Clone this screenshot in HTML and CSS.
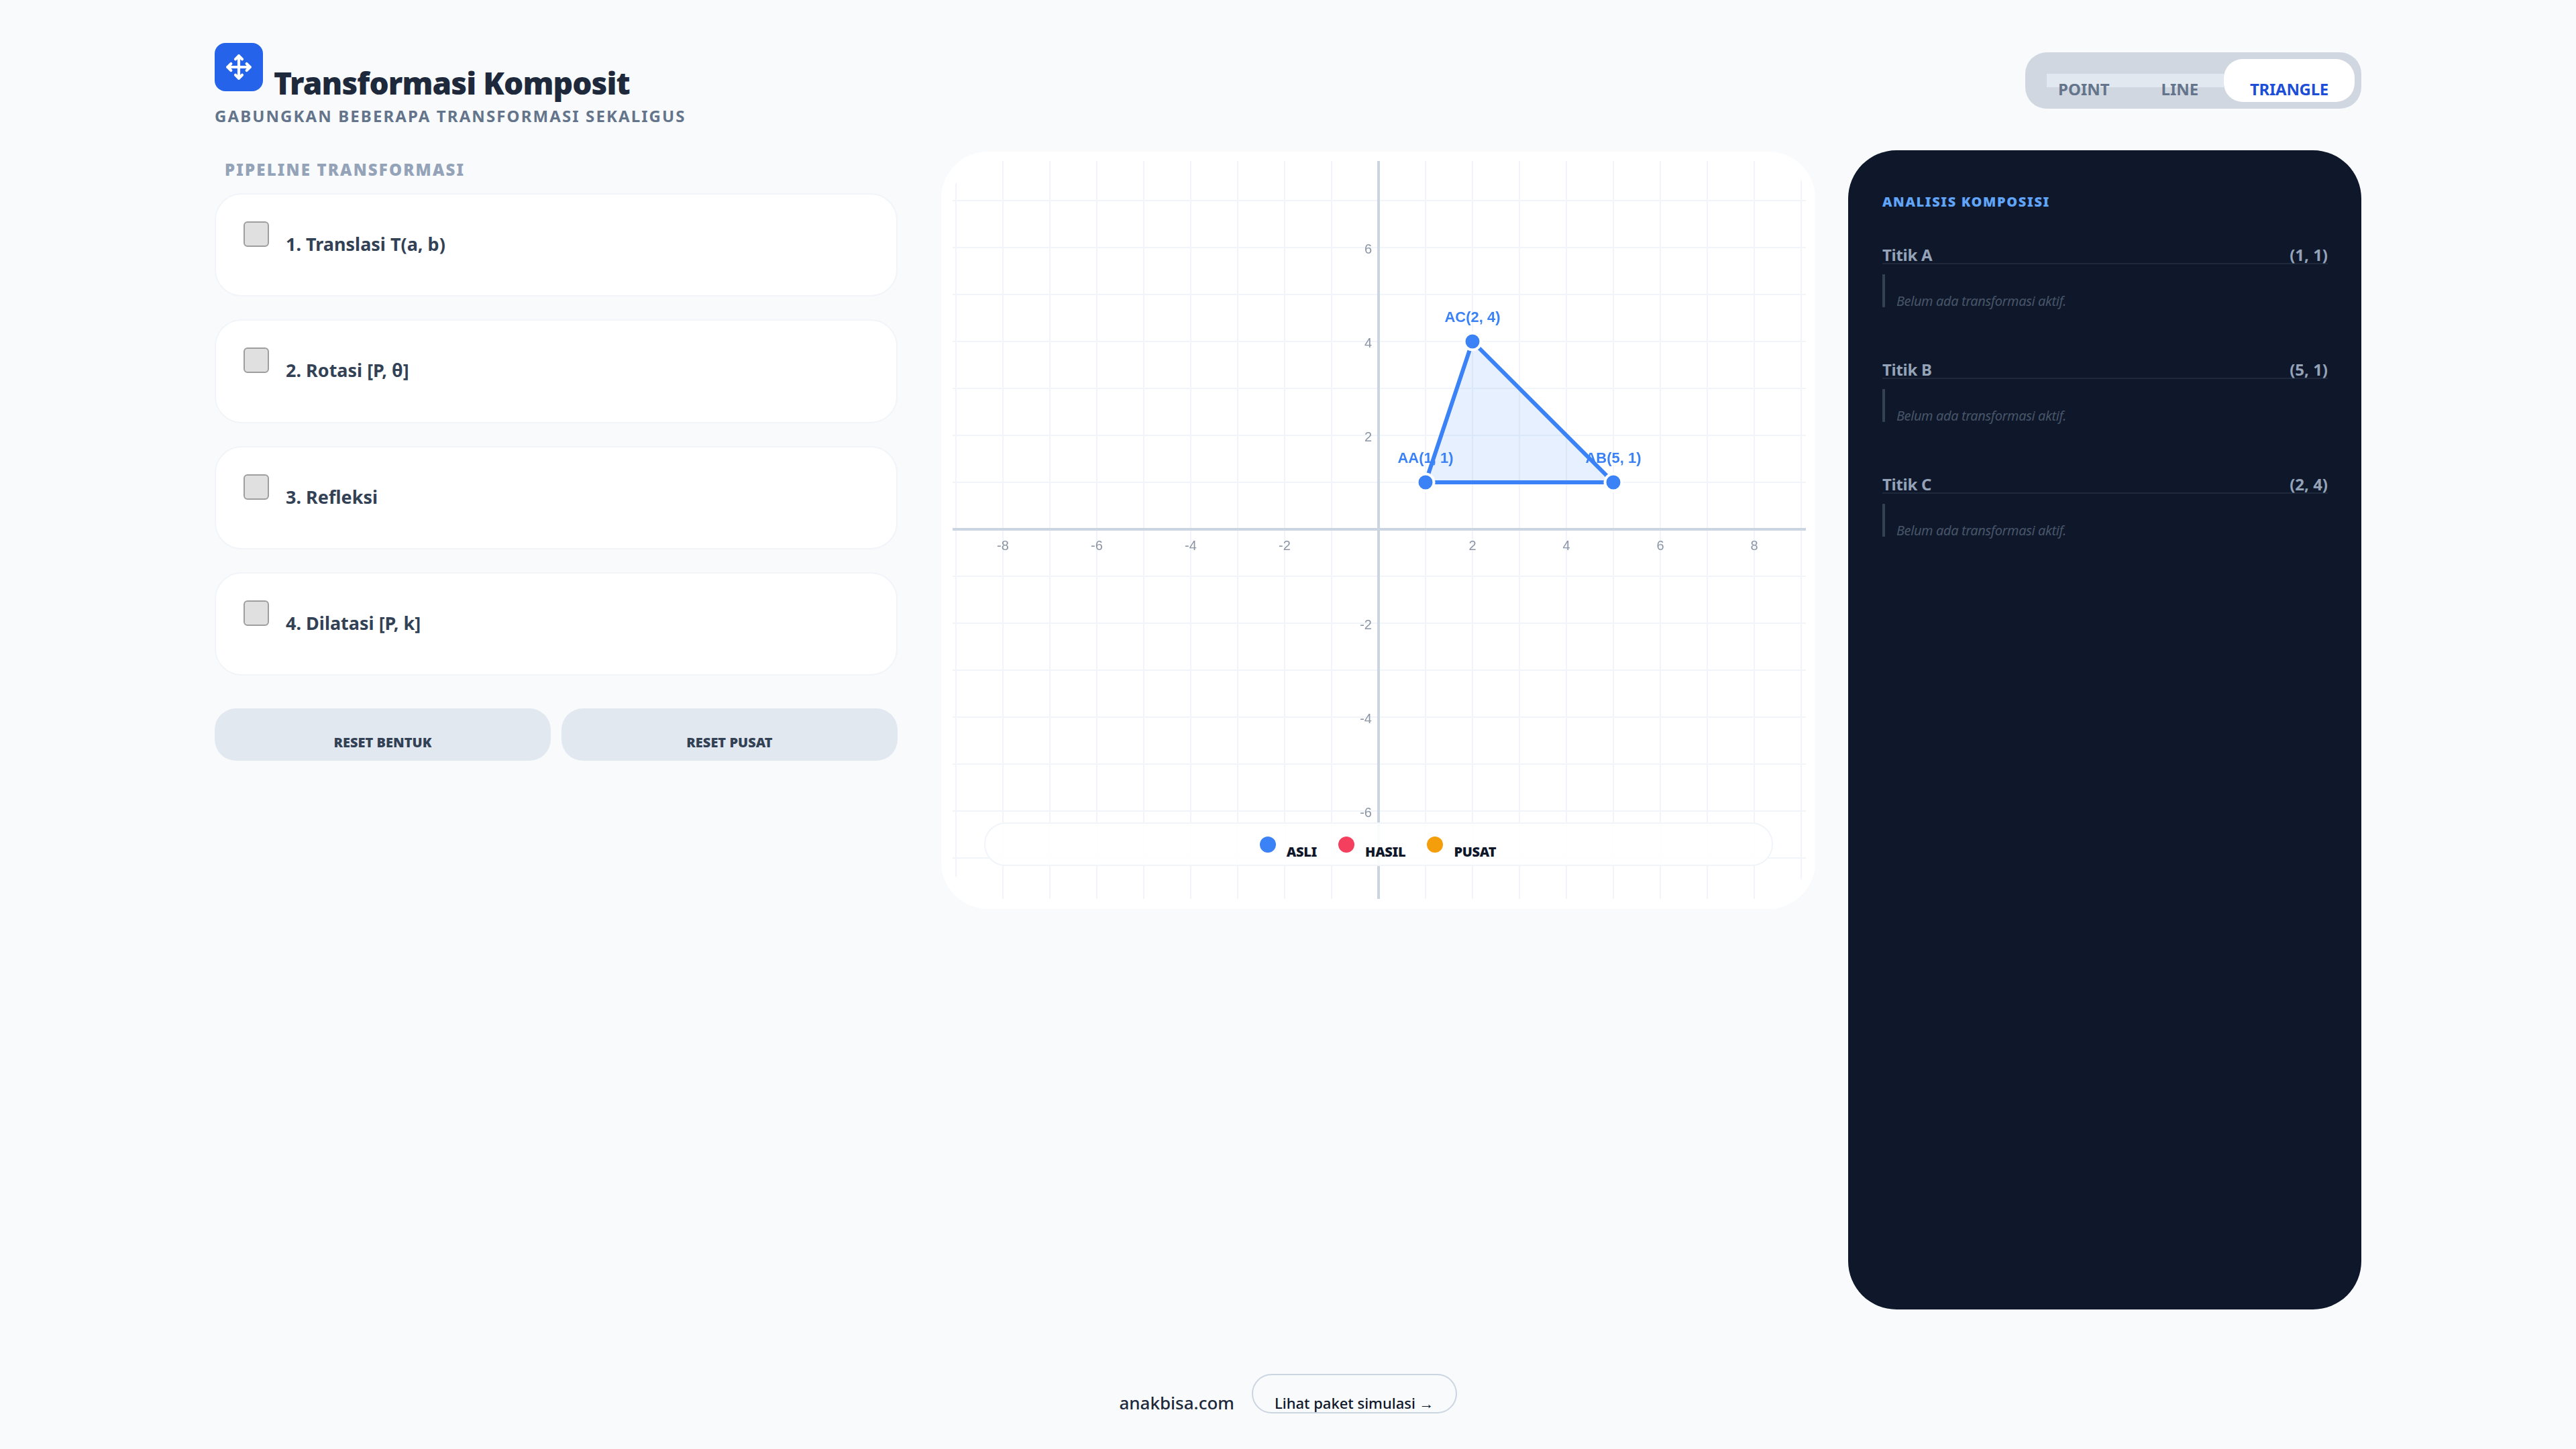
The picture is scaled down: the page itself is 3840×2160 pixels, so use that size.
FILE: index.html
```html
<!DOCTYPE html>
<html lang="en">

<head>
    <meta charset="UTF-8">
    <title>Transformasi Komposit</title>
    <link rel="stylesheet" href="styles.css">
</head>

<body>
    <header class="top">
        <div>
            <div class="brand">
                <span class="brand-icon">
                    <svg width="40" height="40" viewBox="0 0 24 24" fill="none" stroke="white" stroke-width="2.5" stroke-linecap="round" stroke-linejoin="round">
                        <polyline points="5 9 2 12 5 15"></polyline>
                        <polyline points="9 5 12 2 15 5"></polyline>
                        <polyline points="15 19 12 22 9 19"></polyline>
                        <polyline points="19 9 22 12 19 15"></polyline>
                        <line x1="2" y1="12" x2="22" y2="12"></line>
                        <line x1="12" y1="2" x2="12" y2="22"></line>
                    </svg>
                </span>
                <h1>Transformasi Komposit</h1>
            </div>
            <p class="subtitle">GABUNGKAN BEBERAPA TRANSFORMASI SEKALIGUS</p>
        </div>

        <div class="shape-toggle">
            <div class="shape-rest">
                <button class="shape-btn point">POINT</button>
                <button class="shape-btn line">LINE</button>
            </div>
            <button class="shape-active">TRIANGLE</button>
        </div>
    </header>

    <main class="layout">
        <section class="pipeline">
            <h2 class="section-label">PIPELINE TRANSFORMASI</h2>

            <div class="step-list">
                <label class="step-card"><input type="checkbox"><span>1. Translasi T(a, b)</span></label>
                <label class="step-card"><input type="checkbox"><span>2. Rotasi [P, θ]</span></label>
                <label class="step-card"><input type="checkbox"><span>3. Refleksi</span></label>
                <label class="step-card"><input type="checkbox"><span>4. Dilatasi [P, k]</span></label>
            </div>

            <div class="reset-row">
                <button class="reset-btn">RESET BENTUK</button>
                <button class="reset-btn">RESET PUSAT</button>
            </div>
        </section>

        <section class="graph-card">
            <svg class="graph" width="1272" height="1100" viewBox="0 0 1272 1100">
                <path class="grid" d="M5 0V1100M75 0V1100M145 0V1100M215 0V1100M285 0V1100M355 0V1100M425 0V1100M495 0V1100M565 0V1100M705 0V1100M775 0V1100M845 0V1100M915 0V1100M985 0V1100M1055 0V1100M1125 0V1100M1195 0V1100M1265 0V1100M0 59H1272M0 129H1272M0 199H1272M0 269H1272M0 339H1272M0 409H1272M0 479H1272M0 619H1272M0 689H1272M0 759H1272M0 829H1272M0 899H1272M0 969H1272M0 1039H1272"></path>
                <path class="axis" d="M635 0V1100M0 549H1272"></path>

                <g class="tick-x">
                    <text x="75" y="580">-8</text>
                    <text x="215" y="580">-6</text>
                    <text x="355" y="580">-4</text>
                    <text x="495" y="580">-2</text>
                    <text x="775" y="580">2</text>
                    <text x="915" y="580">4</text>
                    <text x="1055" y="580">6</text>
                    <text x="1195" y="580">8</text>
                </g>
                <g class="tick-y">
                    <text x="625" y="138">6</text>
                    <text x="625" y="278">4</text>
                    <text x="625" y="418">2</text>
                    <text x="625" y="698">-2</text>
                    <text x="625" y="838">-4</text>
                    <text x="625" y="978">-6</text>
                </g>

                <g class="point-label">
                    <text x="705" y="450">AA(1, 1)</text>
                    <text x="985" y="450">AB(5, 1)</text>
                    <text x="775" y="240">AC(2, 4)</text>
                </g>

                <polygon class="shape" points="705,479 985,479 775,269"></polygon>
                <circle class="vertex" cx="705" cy="479" r="12.5"></circle>
                <circle class="vertex" cx="985" cy="479" r="12.5"></circle>
                <circle class="vertex" cx="775" cy="269" r="12.5"></circle>
            </svg>

            <div class="legend">
                <span class="legend-item"><i class="dot blue"></i><b>ASLI</b></span>
                <span class="legend-item"><i class="dot red"></i><b>HASIL</b></span>
                <span class="legend-item"><i class="dot amber"></i><b>PUSAT</b></span>
            </div>
        </section>

        <aside class="analysis">
            <h2>ANALISIS KOMPOSISI</h2>

            <div class="point-block">
                <div class="point-row"><span class="point-name">Titik A</span><span>(1, 1)</span></div>
                <p class="point-note">Belum ada transformasi aktif.</p>
            </div>
            <div class="point-block">
                <div class="point-row"><span class="point-name">Titik B</span><span>(5, 1)</span></div>
                <p class="point-note">Belum ada transformasi aktif.</p>
            </div>
            <div class="point-block">
                <div class="point-row"><span class="point-name">Titik C</span><span>(2, 4)</span></div>
                <p class="point-note">Belum ada transformasi aktif.</p>
            </div>
        </aside>
    </main>

    <footer class="foot">
        <span class="foot-name">anakbisa.com</span>
        <a class="foot-link">Lihat paket simulasi →</a>
    </footer>
</body>

</html>
```

FILE: styles.css
```css
* {
    box-sizing: border-box;
}

body {
    margin: 0;
    width: 3840px;
    height: 2160px;
    overflow: hidden;
    background: #f8fafc;
    font-family: "Noto Sans", sans-serif;
    padding: 64px 320px 0;
}

h1,
h2,
p {
    margin: 0;
}

button {
    font-family: inherit;
    border: none;
    padding: 0;
    background: none;
}

.top {
    height: 160px;
    display: flex;
    justify-content: space-between;
    align-items: flex-start;
}

.brand {
    display: flex;
    align-items: flex-end;
    gap: 16px;
}

.brand-icon {
    width: 72px;
    height: 72px;
    border-radius: 16px;
    background: #2563eb;
    display: flex;
    align-items: center;
    justify-content: center;
}

h1 {
    font-size: 46px;
    font-weight: 900;
    line-height: 48px;
    letter-spacing: -0.9px;
    color: #1e293b;
    margin-bottom: -11px;
}

.subtitle {
    margin-top: 20px;
    font-size: 24px;
    font-weight: 700;
    line-height: 33px;
    letter-spacing: 2.1px;
    color: #64748b;
}

.shape-toggle {
    margin-top: 14px;
    width: 501px;
    height: 84px;
    padding: 10px;
    border-radius: 32px;
    background: #d1d7e0;
    display: flex;
    justify-content: space-between;
}

.shape-rest {
    margin: 22px 0 0 22px;
    width: 264px;
    height: 20px;
    background: #e2e8f0;
    display: flex;
}

.shape-btn {
    margin-top: 6px;
    height: 33px;
    font-size: 24px;
    font-weight: 700;
    color: #64748b;
}

.point {
    margin-left: 17px;
}

.line {
    margin-left: 77px;
}

.shape-active {
    width: 195px;
    height: 64px;
    padding-top: 25px;
    border-radius: 28px;
    background: white;
    font-size: 24px;
    font-weight: 700;
    line-height: 33px;
    letter-spacing: -0.3px;
    color: #1d4ed8;
}

.layout {
    display: flex;
    align-items: flex-start;
}

.pipeline {
    width: 1018px;
    margin-right: 63px;
    padding-top: 12px;
}

.section-label {
    padding-left: 15px;
    font-size: 24px;
    font-weight: 900;
    line-height: 33px;
    letter-spacing: 2.15px;
    color: #94a3b8;
    margin-bottom: 19px;
}

.step-list {
    display: flex;
    flex-direction: column;
    gap: 34px;
}

.step-card {
    height: 154.3px;
    padding: 40px 41px;
    background: white;
    border: 2px solid #f1f5f9;
    border-radius: 40px;
    display: flex;
    align-items: flex-start;
    gap: 25px;
    font-size: 27px;
    font-weight: 700;
    line-height: 38px;
    color: #334155;
}

.step-card input {
    appearance: none;
    width: 38px;
    height: 38px;
    margin: 0;
    flex: none;
    background: #e0e0e0;
    border: 2px solid #9e9e9e;
    border-radius: 6px;
}

.step-card span {
    margin-top: 15px;
}

.reset-row {
    margin-top: 49px;
    display: flex;
    gap: 16px;
}

.reset-btn {
    width: 501px;
    height: 78px;
    padding-top: 22px;
    border-radius: 32px;
    background: #e2e8f0;
    font-size: 20px;
    font-weight: 900;
    line-height: 27px;
    color: #334155;
}

.graph-card {
    position: relative;
    width: 1307px;
    height: 1133px;
    margin-right: 47px;
    padding: 16px 18px;
    border-radius: 72px;
    background: white;
    border: 2px solid #f8fafc;
}

.graph {
    display: block;
    margin: -2px 0 0 -1px;
    border-radius: 56px;
    filter: blur(0.7px);
}

.grid {
    stroke: #f1f5f9;
    stroke-width: 2;
    fill: none;
}

.axis {
    stroke: #cbd5e1;
    stroke-width: 4;
    fill: none;
}

.tick-x,
.tick-y {
    font-family: "Liberation Sans", sans-serif;
    font-size: 20px;
    fill: #8b95a5;
}

.tick-x {
    text-anchor: middle;
}

.tick-y {
    text-anchor: end;
}

.point-label {
    font-family: "Liberation Sans", sans-serif;
    font-size: 22px;
    font-weight: 700;
    fill: #3b82f6;
    text-anchor: middle;
}

.shape {
    fill: rgba(59, 130, 246, 0.12);
    stroke: #3b82f6;
    stroke-width: 6;
}

.vertex {
    fill: #3b82f6;
    stroke: white;
    stroke-width: 4;
}

.legend {
    position: absolute;
    left: 64px;
    top: 1000px;
    width: 1176px;
    height: 65px;
    padding: 18px 2px 0 0;
    background: rgba(255, 255, 255, 0.9);
    border: 2px solid #f1f5f9;
    border-radius: 32px;
    display: flex;
    justify-content: center;
    gap: 32px;
}

.legend-item {
    display: flex;
    align-items: flex-start;
    gap: 16px;
    font-size: 20px;
    line-height: 27px;
    color: #0f172a;
}

.legend-item b {
    font-weight: 900;
    letter-spacing: -0.3px;
    margin-top: 10px;
}

.dot {
    width: 24px;
    height: 24px;
    border-radius: 50%;
    margin-top: 1px;
}

.blue {
    background: #3b82f6;
}

.red {
    background: #f43f5e;
}

.amber {
    background: #f59e0b;
}

.analysis {
    width: 765px;
    height: 1728px;
    padding: 63px 50px 0 51px;
    border-radius: 72px;
    background: #0f172a;
}

.analysis h2 {
    font-size: 20px;
    font-weight: 900;
    line-height: 27px;
    letter-spacing: 1.6px;
    color: #60a5fa;
    margin-bottom: 54px;
}

.point-block {
    margin-bottom: 81px;
}

.point-row {
    display: flex;
    justify-content: space-between;
    font-size: 24px;
    font-weight: 700;
    line-height: 24px;
    color: #94a3b8;
    border-bottom: 2px solid #1e293b;
}

.point-name {
    letter-spacing: -0.3px;
}

.point-note {
    margin-top: 15px;
    height: 49px;
    padding: 30px 0 0 17px;
    border-left: 4px solid #334155;
    font-size: 20px;
    font-style: italic;
    line-height: 20px;
    letter-spacing: -0.4px;
    color: #475569;
}

.foot {
    margin-top: 96px;
    display: flex;
    justify-content: center;
    align-items: flex-start;
    gap: 26px;
}

.foot-name {
    margin-top: 26px;
    font-size: 26px;
    font-weight: 500;
    line-height: 35px;
    color: #1e293b;
}

.foot-link {
    height: 59px;
    padding: 26px 32px 0;
    border: 2px solid #cbd5e1;
    border-radius: 30px;
    font-size: 22px;
    font-weight: 500;
    line-height: 30px;
    color: #0f172a;
}
```
